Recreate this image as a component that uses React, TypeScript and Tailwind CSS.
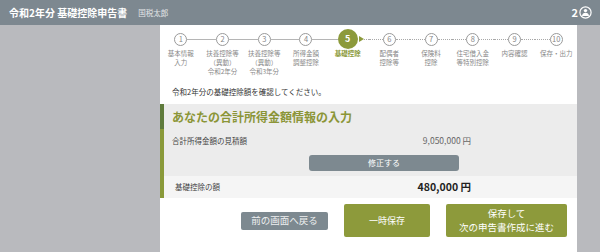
import React from "react";

const steps: { n: number; label: string[] }[] = [
  { n: 1, label: ["基本情報", "入力"] },
  { n: 2, label: ["扶養控除等", "（異動）", "令和2年分"] },
  { n: 3, label: ["扶養控除等", "（異動）", "令和3年分"] },
  { n: 4, label: ["所得金額", "調整控除"] },
  { n: 5, label: ["基礎控除"] },
  { n: 6, label: ["配偶者", "控除等"] },
  { n: 7, label: ["保険料", "控除"] },
  { n: 8, label: ["住宅借入金", "等特別控除"] },
  { n: 9, label: ["内容確認"] },
  { n: 10, label: ["保存・出力"] },
];

function Step({ n, label }: { n: number; label: string[] }) {
  const active = n === 5;
  const done = n < 5;
  return (
    <div className="flex-1 flex flex-col items-center">
      <div className="w-full h-[20px] flex items-center">
        {n === 1 ? (
          <div className="flex-1" />
        ) : done || active ? (
          <div className="flex-1 h-px bg-[#b5b5b5]" />
        ) : (
          <div className="flex-1 border-t border-dotted border-[#a8a8a8]" />
        )}
        {active ? (
          <div className="w-[20px] h-[20px] rounded-full bg-[#8c9a3b] text-white text-[9px] font-bold flex items-center justify-center">
            5
          </div>
        ) : (
          <div className="w-[13px] h-[13px] rounded-full border border-[#9a9a9a] text-[#888] text-[7.5px] leading-none flex items-center justify-center bg-white">
            {n}
          </div>
        )}
        {n === 10 ? (
          <div className="flex-1" />
        ) : active ? (
          <div className="flex-1 flex items-center">
            <div className="w-0 h-0 ml-[1px] border-y-[3px] border-y-transparent border-l-[5px] border-l-[#8c9a3b]" />
            <div className="flex-1 border-t border-dotted border-[#a8a8a8]" />
          </div>
        ) : done ? (
          <div className="flex-1 h-px bg-[#b5b5b5]" />
        ) : (
          <div className="flex-1 border-t border-dotted border-[#a8a8a8]" />
        )}
      </div>
      <div
        className={
          "text-center whitespace-nowrap text-[6.5px] leading-[9px] " +
          (active ? "text-[#8c9a3b] font-bold" : "text-[#888]")
        }
      >
        {label.map((l, i) => (
          <div key={i}>{l}</div>
        ))}
      </div>
    </div>
  );
}

export default function App() {
  return (
    <div
      className="w-[600px] h-[252px] overflow-hidden bg-white"
      style={{ fontFamily: '"Noto Sans CJK JP", "Noto Sans", sans-serif' }}
    >
      <div className="h-[25px] bg-[#7d8890] flex items-center pl-[9px] pr-[8px]">
        <div className="text-white font-bold text-[10px]">令和2年分 基礎控除申告書</div>
        <div className="ml-[11px] text-[#e4e7e9] text-[7.5px]">国税太郎</div>
        <div className="ml-auto flex items-center gap-[1px] text-white font-bold text-[11px]">
          <span>2</span>
          <svg width="13" height="13" viewBox="0 0 13 13">
            <circle cx="6.5" cy="6.5" r="5.6" fill="none" stroke="white" strokeWidth="1.2" />
            <circle cx="6.5" cy="4.6" r="1.7" fill="white" />
            <path d="M3 10 Q3.5 6.8 6.5 6.8 Q9.5 6.8 10 10 Z" fill="white" />
          </svg>
        </div>
      </div>
      <div className="flex h-[227px]">
        <div className="w-[160px] bg-[#b9babe]" />
        <div className="w-[417px] bg-white flex flex-col">
          <div className="flex pt-[4px]">
            {steps.map((s) => (
              <Step key={s.n} n={s.n} label={s.label} />
            ))}
          </div>
          <div className="mt-[11px] pl-[12px] text-[7.5px] leading-[10px] text-[#333]">
            令和2年分の基礎控除額を確認してください。
          </div>
          <div className="mt-[7px] flex bg-[#ececec] h-[94px]">
            <div className="w-[4px] flex flex-col">
              <div className="h-[25px] bg-[#5f7b3c]" />
              <div className="flex-1 bg-[#8a9a3a]" />
            </div>
            <div className="flex-1 flex flex-col">
              <div className="h-[25px] flex items-center pl-[8px] text-[12px] font-bold text-[#8b9537]">
                あなたの合計所得金額情報の入力
              </div>
              <div className="h-[23px] flex items-center pl-[8px] pr-[106px] text-[7.5px] text-[#444]">
                <span>合計所得金額の見積額</span>
                <span className="ml-auto text-[8.5px] text-[#666]">9,050,000 円</span>
              </div>
              <div className="pl-[145px] mt-[3px]">
                <div className="w-[150px] h-[16px] rounded-[3px] bg-[#7d8990] text-white text-[8px] flex items-center justify-center">
                  修正する
                </div>
              </div>
              <div className="mt-[5px] flex-1 bg-[#f5f5f5] flex items-center pl-[11px] pr-[106px]">
                <span className="text-[7.5px] text-[#444]">基礎控除の額</span>
                <span className="ml-auto text-[10.5px] font-bold text-[#222]">480,000 円</span>
              </div>
            </div>
          </div>
          <div className="mt-[6px] flex items-center justify-end gap-[16px] pr-[10px]">
            <div className="w-[87px] h-[18px] rounded-[2px] bg-[#7d8990] text-[#eef0f1] text-[9.5px] flex items-center justify-center">
              前の画面へ戻る
            </div>
            <div className="w-[86px] h-[33px] rounded-[2px] bg-[#8d9a3b] text-white text-[9px] flex items-center justify-center">
              一時保存
            </div>
            <div className="w-[121px] h-[33px] rounded-[2px] bg-[#8d9a3b] text-white text-[9.5px] leading-[13.5px] flex flex-col items-center justify-center">
              <span>保存して</span>
              <span>次の申告書作成に進む</span>
            </div>
          </div>
        </div>
        <div className="flex-1 bg-[#b9babe]" />
      </div>
    </div>
  );
}
